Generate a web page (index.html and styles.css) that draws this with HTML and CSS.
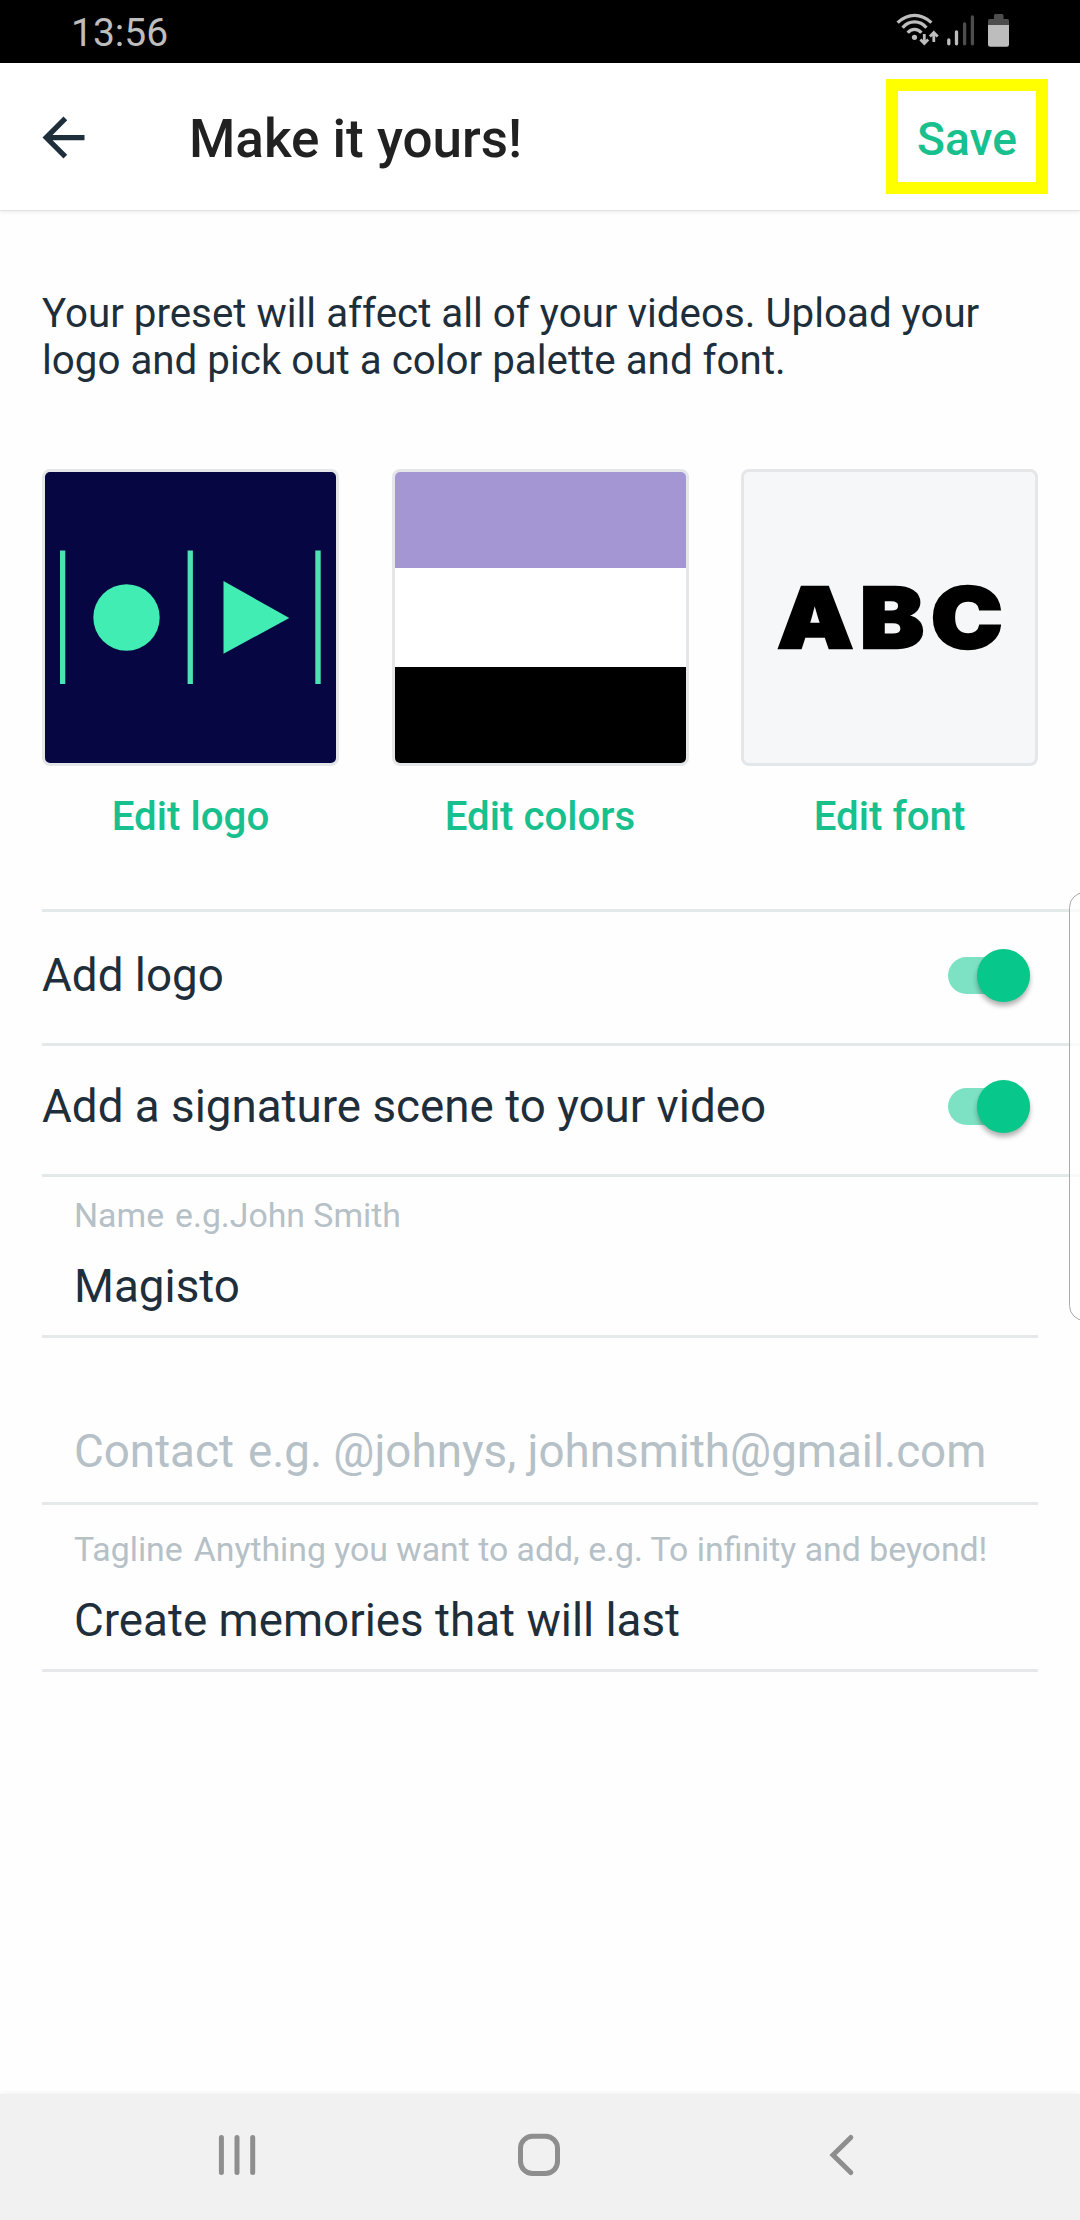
FILE: index.html
```
<!DOCTYPE html>
<html lang="en">
<head>
<meta charset="utf-8">
<title>Make it yours!</title>
<link rel="stylesheet" href="styles.css">
</head>
<body>
<div class="screen">
  <div class="status">
    <span class="clock">13:56</span>
    <svg class="status-icons" width="120" height="63" viewBox="890 0 120 63" fill="none">
      <g stroke="#bdbdbd" stroke-width="3.3">
        <path d="M897.6 22.6Q905.5 15.3 914.5 15.3T931.4 22.6"/>
        <path d="M902.6 27.7Q907.5 21.9 914.5 21.9T926.4 27.7"/>
        <path d="M907.7 32.7Q910.5 29.3 914.5 29.3T921.4 32.7"/>
        <path d="M924.3 34V43M920.4 39.5L924.3 43.4L928.2 39.5M933.8 42V33M929.9 36.5L933.8 32.6L937.7 36.5" stroke-width="2.8"/>
      </g>
      <circle cx="914.5" cy="37.3" r="2.6" fill="#bdbdbd"/>
      <g stroke-width="3.3" stroke-linecap="round">
        <path d="M948.8 40V43.8M956.5 32V43.8" stroke="#bdbdbd"/>
        <path d="M964.6 24V43.8M972.4 17V43.8" stroke="#4d4d4d"/>
      </g>
      <path d="M994 19V15.5Q994 14 995.5 14H1002Q1003.5 14 1003.5 15.5V19H1007.5Q1009 19 1009 20.5V25H988V20.5Q988 19 989.5 19Z" fill="#4d4d4d"/>
      <path d="M988 25H1009V44.5Q1009 46.7 1006.8 46.7H990.2Q988 46.7 988 44.5Z" fill="#bdbdbd"/>
    </svg>
  </div>
  <header class="header">
    <svg class="back" width="63" height="63" viewBox="0 0 24 24"><path d="M20 11H7.83l5.59-5.59L12 4l-8 8 8 8 1.41-1.41L7.83 13H20v-2z" fill="#1e2e3a"/></svg>
    <h1 class="title">Make it yours!</h1>
    <button class="save">Save</button>
  </header>
  <main class="content">
    <p class="intro">Your preset will affect all of your videos. Upload your<br>logo and pick out a color palette and font.</p>
    <div class="tiles">
      <div class="tile">
        <div class="preview logo">
          <svg width="291" height="291" viewBox="45 472 291 291">
            <path d="M60 550.5h5.3V684h-5.3zM187.6 550.5h5.3V684h-5.3zM315.3 550.5h5.4V684h-5.4z" fill="#4be3b1"/>
            <circle cx="126.5" cy="617.5" r="33.2" fill="#42edb3"/>
            <path d="M223.5 581V653.7L289.3 618Z" fill="#42edb3"/>
          </svg>
        </div>
        <span class="tile-label">Edit logo</span>
      </div>
      <div class="tile">
        <div class="preview palette"><i class="swatch purple"></i><i class="swatch white"></i><i class="swatch black"></i></div>
        <span class="tile-label">Edit colors</span>
      </div>
      <div class="tile">
        <div class="preview font"><span class="sample">ABC</span></div>
        <span class="tile-label">Edit font</span>
      </div>
    </div>
    <div class="row first"><span>Add logo</span><span class="switch"><i class="thumb"></i></span></div>
    <div class="row"><span class="long">Add a signature scene to your video</span><span class="switch"><i class="thumb"></i></span></div>
    <div class="field name"><label class="hint"><span class="key">Name</span>e.g.John Smith</label><div class="value">Magisto</div></div>
    <div class="field contact"><div class="value empty"><span class="key">Contact</span>e.g. @johnys, johnsmith@gmail.com</div></div>
    <div class="field tagline"><label class="hint"><span class="key">Tagline</span>Anything you want to add, e.g. To infinity and beyond!</label><div class="value">Create memories that will last</div></div>
  </main>
  <nav class="nav">
    <svg width="720" height="126" viewBox="180 2094 720 126" fill="none" stroke="#8e8e8e" stroke-width="5" stroke-linecap="round">
      <path d="M221.4 2137.5V2172.5M237 2137.5V2172.5M252.7 2137.5V2172.5"/>
      <rect x="520.5" y="2136.3" width="37" height="37.3" rx="12"/>
      <path d="M850.8 2137.5L833 2155L850.8 2172.5"/>
    </svg>
  </nav>
  <div class="edge-panel"></div>
</div>
</body>
</html>
```
FILE: styles.css
```
* { box-sizing: border-box; }
body { margin: 0; background: #fff; }
.screen {
  position: relative;
  display: flex;
  flex-direction: column;
  width: 1080px;
  height: 2220px;
  overflow: hidden;
  background: #fefefe;
  color: #1e2e3a;
  font-family: Roboto, "Liberation Sans", sans-serif;
}
.status {
  display: flex;
  justify-content: space-between;
  height: 63px;
  padding: 0 70px 0 71px;
  background: #000;
}
.clock { color: #bdbdbd; font-size: 39px; line-height: 66px; }
.header {
  display: flex;
  align-items: center;
  height: 148px;
  padding: 0 32px;
  background: #fff;
  border-bottom: 1px solid #e2e2e2;
  box-shadow: 0 1px 4px rgba(0, 0, 0, .08);
}
.back { flex: none; margin-top: 1px; }
.title { flex: 1; margin: 0 0 0 94px; padding-top: 4px; color: #212121; font-size: 53px; font-weight: 500; line-height: 62px; }
.save {
  width: 162px;
  height: 115px;
  padding: 4px 0 0;
  border: 12px solid #ff0;
  background: #fff;
  color: #17c08d;
  font: 500 46.2px/52px Roboto, "Liberation Sans", sans-serif;
}
.content { flex: 1; padding: 79px 42px 0; }
.intro { margin: 0; font-size: 40.32px; line-height: 47px; white-space: nowrap; }
.tiles { display: flex; justify-content: space-between; margin-top: 85px; }
.tile { display: flex; flex-direction: column; align-items: center; width: 297px; }
.preview {
  display: flex;
  width: 297px;
  height: 297px;
  overflow: hidden;
  border: 3px solid #e4e7e9;
  border-radius: 8px;
}
.logo { background: #060742; }
.palette { flex-direction: column; }
.swatch { flex: 1; }
.purple { background: #a496d3; }
.white { flex: 0 0 99px; background: #fff; }
.black { background: #000; }
.font { align-items: center; justify-content: center; background: #f5f7f9; }
.sample {
  padding-left: 6px;
  color: #000;
  font: 900 84px/100px Inter, sans-serif;
  letter-spacing: 6px;
  transform: scaleX(1.14);
  -webkit-text-stroke: 2.5px #000;
}
.tile-label { margin-top: 27px; color: #17c08d; font-size: 40.27px; font-weight: 500; line-height: 47px; }
.row {
  display: flex;
  align-items: center;
  justify-content: space-between;
  width: 1038px;
  height: 131px;
  padding: 0 50px 8px 0;
  border-bottom: 3px solid #e3e8e8;
  font-size: 45.75px;
  line-height: 54px;
}
.row.first { height: 137px; margin-top: 69px; padding-bottom: 4px; border-top: 3px solid #e3e8e8; }
.long { padding-top: 1px; }
.switch { display: flex; align-items: center; justify-content: flex-end; width: 82px; height: 37px; border-radius: 19px; background: #7de1c3; }
.thumb { flex: none; width: 53px; height: 53px; border-radius: 50%; background: #08c78b; box-shadow: 0 4px 5px rgba(0, 0, 0, .3); }
.field { padding-left: 32px; border-bottom: 3px solid #e5e9ea; white-space: nowrap; }
.name { height: 161px; padding-top: 19px; }
.contact { height: 167px; padding-top: 87px; }
.tagline { height: 167px; padding-top: 25px; }
.hint { display: block; color: #b5c0c7; font-size: 33.8px; line-height: 40px; }
.value { margin-top: 24px; font-size: 45.75px; line-height: 54px; }
.value.empty { margin: 0; color: #b5c0c7; }
.key { margin-right: 11px; }
.empty .key { margin-right: 14px; }
.nav { display: flex; justify-content: center; height: 126px; background: #f1f1f1; box-shadow: 0 -1px 4px rgba(0, 0, 0, .05); }
.edge-panel {
  position: absolute;
  top: 892px;
  right: -20px;
  width: 31px;
  height: 429px;
  border: 1.5px solid #aaa;
  border-radius: 17px;
  background: rgba(255, 255, 255, .75);
}
```
